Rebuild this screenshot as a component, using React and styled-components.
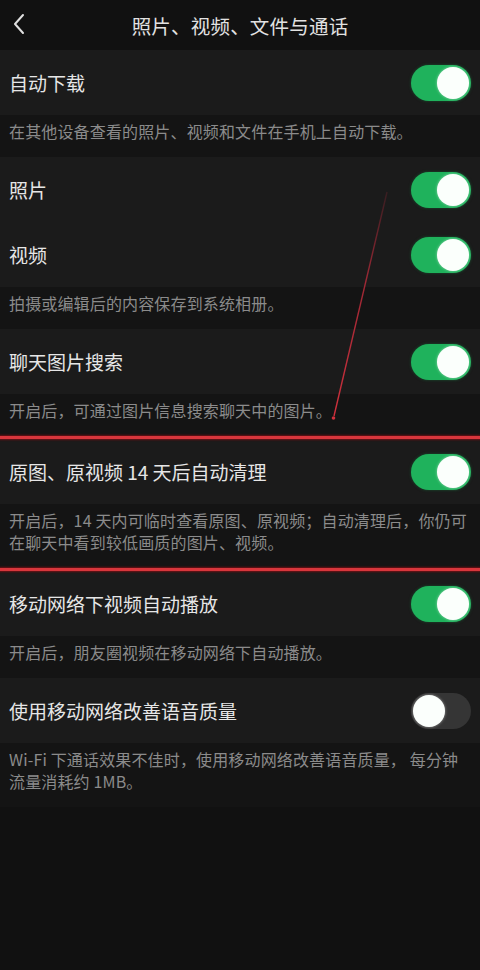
import React from "react";
import styled, { createGlobalStyle } from "styled-components";

const Global = createGlobalStyle`
  html, body { margin: 0; padding: 0; background: #111111; }
  body { font-family: "Noto Sans CJK SC", "Noto Sans", sans-serif; -webkit-font-smoothing: antialiased; }
  * { box-sizing: border-box; }
`;

const Page = styled.div`
  position: relative;
  width: 480px;
  min-height: 970px;
  background: #111111;
  display: flex;
  flex-direction: column;
`;

const Header = styled.header`
  height: 50px;
  display: flex;
  align-items: center;
  justify-content: center;
  position: relative;
  background: #111111;
`;

const Back = styled.button`
  position: absolute;
  left: 6px;
  top: 11px;
  width: 26px;
  height: 26px;
  padding: 0;
  border: 0;
  background: transparent;
  display: flex;
  align-items: center;
  justify-content: center;
`;

const Title = styled.h1`
  margin: 0;
  font-size: 19.5px;
  font-weight: 400;
  color: #e2e2e2;
  letter-spacing: 0.2px;
`;

const Cell = styled.div`
  height: 65px;
  display: flex;
  align-items: center;
  justify-content: space-between;
  padding: 0 9px 0 9px;
  background: #1b1b1b;
`;

const Label = styled.span`
  font-size: 19px;
  color: #e6e6e6;
  line-height: 1;
`;

const Desc = styled.div`
  background: #141414;
  padding: 5px 8px 15px 9px;
  font-size: 16px;
  line-height: 22px;
  color: #8b8b8b;
  white-space: nowrap;
  letter-spacing: 0.15px;
`;

const Track = styled.div`
  width: 60px;
  height: 36px;
  border-radius: 18px;
  background: ${(p) => (p.$on ? "#1fb25c" : "#353535")};
  position: relative;
  flex-shrink: 0;
  box-shadow: ${(p) => (p.$on ? "0 0 3px rgba(20,120,60,0.6)" : "none")};
`;

const Knob = styled.div`
  position: absolute;
  top: 2px;
  left: ${(p) => (p.$on ? "26px" : "2px")};
  width: 32px;
  height: 32px;
  border-radius: 50%;
  background: #fbfffc;
  box-shadow: 0 0 3px rgba(255, 255, 255, 0.5);
`;

const Marker = styled.div`
  height: 3px;
  background: #d8363c;
  box-shadow: 0 0 2px 1px rgba(120, 16, 20, 0.9);
  position: relative;
  z-index: 1;
`;

const Overlay = styled.svg`
  position: absolute;
  left: 0;
  top: 0;
  pointer-events: none;
`;

const Toggle = ({ on }) => (
  <Track $on={on}>
    <Knob $on={on} />
  </Track>
);

const Row = ({ label, on }) => (
  <Cell>
    <Label>{label}</Label>
    <Toggle on={on} />
  </Cell>
);

const Note = ({ lines }) => (
  <Desc>
    {lines.map((l, i) => (
      <div key={i}>{l}</div>
    ))}
  </Desc>
);

export default function App() {
  return (
    <>
      <Global />
      <Page>
        <Header>
          <Back aria-label="back">
            <svg width="14" height="22" viewBox="0 0 14 22">
              <polyline
                points="11,2 3,11 11,20"
                fill="none"
                stroke="#e0e0e0"
                strokeWidth="2"
                strokeLinecap="round"
                strokeLinejoin="round"
              />
            </svg>
          </Back>
          <Title>照片、视频、文件与通话</Title>
        </Header>

        <Row label="自动下载" on />
        <Note lines={["在其他设备查看的照片、视频和文件在手机上自动下载。"]} />

        <Row label="照片" on />
        <Row label="视频" on />
        <Note lines={["拍摄或编辑后的内容保存到系统相册。"]} />

        <Row label="聊天图片搜索" on />
        <Note lines={["开启后，可通过图片信息搜索聊天中的图片。"]} />

        <Marker />
        <Row label="原图、原视频 14 天后自动清理" on />
        <Note
          lines={[
            "开启后，14 天内可临时查看原图、原视频；自动清理后，你仍可",
            "在聊天中看到较低画质的图片、视频。",
          ]}
        />
        <Marker />

        <Row label="移动网络下视频自动播放" on />
        <Note lines={["开启后，朋友圈视频在移动网络下自动播放。"]} />

        <Row label="使用移动网络改善语音质量" on={false} />
        <Note
          lines={[
            "Wi-Fi 下通话效果不佳时，使用移动网络改善语音质量， 每分钟",
            "流量消耗约 1MB。",
          ]}
        />

        <Overlay width="480" height="970" viewBox="0 0 480 970">
          <defs>
            <linearGradient id="arrowFade" x1="0" y1="0" x2="0" y2="1">
              <stop offset="0" stopColor="#b02838" stopOpacity="0.2" />
              <stop offset="0.4" stopColor="#c02c3c" stopOpacity="0.8" />
              <stop offset="1" stopColor="#d0303c" stopOpacity="1" />
            </linearGradient>
          </defs>
          <line
            x1="387"
            y1="192"
            x2="334"
            y2="416"
            stroke="url(#arrowFade)"
            strokeWidth="1.4"
          />
          <circle cx="333.5" cy="418" r="1.8" fill="#d0303c" />
        </Overlay>
      </Page>
    </>
  );
}
